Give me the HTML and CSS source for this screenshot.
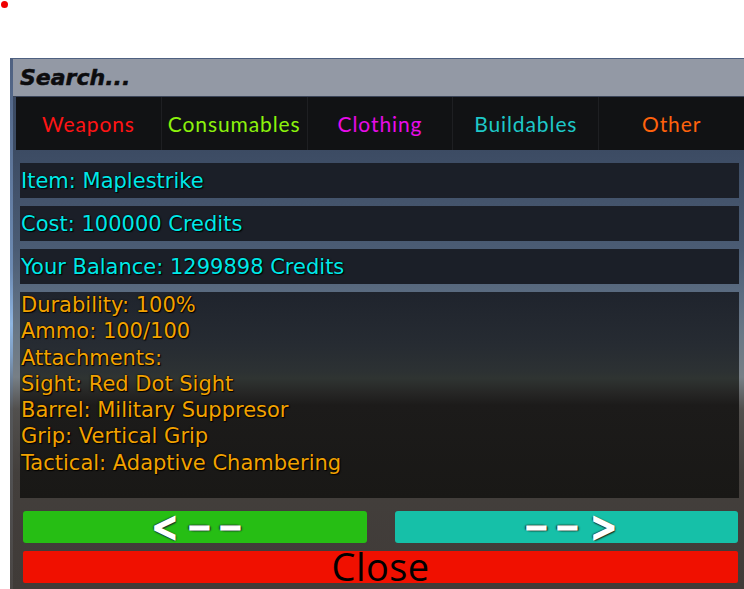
FILE: index.html
```html
<!DOCTYPE html>
<html>
<head>
<meta charset="utf-8">
<link rel="stylesheet" href="styles.css">
</head>
<body>
<div class="dot"></div>
<div class="panel">
  <div class="search">Search...</div>
  <div class="tabs">
    <div class="tab weapons">Weapons</div>
    <div class="tab consumables">Consumables</div>
    <div class="tab clothing">Clothing</div>
    <div class="tab buildables">Buildables</div>
    <div class="tab other">Other</div>
  </div>
  <div class="info">
    <div class="row">Item: Maplestrike</div>
    <div class="row">Cost: 100000 Credits</div>
    <div class="row">Your Balance: 1299898 Credits</div>
    <div class="details">
      <div>Durability: 100%</div>
      <div>Ammo: 100/100</div>
      <div>Attachments:</div>
      <div>Sight: Red Dot Sight</div>
      <div>Barrel: Military Suppresor</div>
      <div>Grip: Vertical Grip</div>
      <div>Tactical: Adaptive Chambering</div>
    </div>
  </div>
  <div class="nav">
    <button class="btn prev"><span class="lt">&lt;</span><span class="dash">-</span><span class="dash">-</span></button>
    <button class="btn next"><span class="dash">-</span><span class="dash">-</span><span class="gt">&gt;</span></button>
  </div>
  <button class="close"><span>Close</span></button>
</div>
</body>
</html>
```
FILE: styles.css
```css
html, body {
  margin: 0;
  padding: 0;
  background: #ffffff;
  width: 744px;
  height: 589px;
  overflow: hidden;
}

.dot {
  position: absolute;
  left: 1px;
  top: 1px;
  width: 7px;
  height: 7px;
  border-radius: 50%;
  background: #f00000;
}

.panel {
  box-sizing: border-box;
  margin: 58px 0 0 10px;
  width: 734px;
  height: 531px;
  border-top: 1px solid #3a4457;
  border-left: 3px solid #5a6f90;
  border-image: linear-gradient(to bottom, #4e6080 0%, #6e8cb4 40%, #8fb6e2 50%, #7d9cc0 56%, #55575a 66%, #4a4644 100%) 1;
  border-top-width: 1px;
  background: linear-gradient(to bottom,
    #3b4962 0%,
    #3c4b63 17%,
    #44546c 27%,
    #4b5c74 36%,
    #5a6b80 44%,
    #6a7886 52%,
    #777f86 60%,
    #52504e 66%,
    #433f3c 78%,
    #403b38 100%);
  display: flex;
  flex-direction: column;
}

.search {
  height: 38px;
  box-sizing: border-box;
  background: #9399a5;
  border-bottom: 1px solid #3a4458;
  padding-left: 7px;
  display: flex;
  align-items: center;
  font-family: "DejaVu Sans", sans-serif;
  font-weight: bold;
  font-style: italic;
  font-size: 22px;
  color: #0c0c0e;
  -webkit-text-stroke: 0.5px #0c0c0e;
}

.tabs {
  margin-left: 3px;
  height: 53px;
  display: grid;
  grid-template-columns: repeat(5, 1fr);
  gap: 1px;
  background: #1e1f22;
}

.tab {
  background: #111214;
  display: flex;
  align-items: center;
  justify-content: center;
  font-family: Lato, "Liberation Sans", sans-serif;
  font-weight: 400;
  font-size: 21px;
  letter-spacing: 0.9px;
}

.weapons { color: #ff1414; }
.consumables { color: #8cf20c; }
.clothing { color: #e80ce8; }
.buildables { color: #1ec8c8; }
.other { color: #ff620c; }

.info {
  margin: 13px 5px 0 7px;
  display: flex;
  flex-direction: column;
  gap: 8px;
}

.row {
  height: 35px;
  background: #1b1f28;
  display: flex;
  align-items: center;
  padding-left: 1px;
  font-family: "DejaVu Sans", sans-serif;
  font-size: 21px;
  color: #00e8e8;
  text-shadow: 1px 1px 1px #000, 0 0 2px #000;
}

.details {
  height: 206px;
  box-sizing: border-box;
  padding-left: 1px;
  background: linear-gradient(to bottom,
    #1f242d 0%,
    #262b32 25%,
    #2c3133 38%,
    #2f3432 42%,
    #262625 49%,
    #1c1b1a 55%,
    #191816 100%);
  font-family: "DejaVu Sans", sans-serif;
  font-size: 21px;
  line-height: 26.3px;
  color: #f2a200;
  text-shadow: 1px 1px 1px #000, 0 0 2px #000;
}

.nav {
  margin: 13px 6px 0 10px;
  display: grid;
  grid-template-columns: 1fr 1fr;
  gap: 28px;
}

.btn {
  height: 32px;
  border: none;
  border-radius: 3px;
  padding: 0 0 0 7px;
  display: flex;
  align-items: center;
  justify-content: center;
  font-family: "DejaVu Sans", sans-serif;
  font-weight: bold;
  font-size: 26px;
  color: #ffffff;
}

.prev { background: #26be14; }
.next { background: #16c0a8; }

.lt, .gt, .dash {
  display: inline-block;
  -webkit-text-stroke: 1.4px #ffffff;
  text-shadow: 1px 0 1px #1a3a28, -1px 0 1px #1a3a28, 0 1px 1px #1a3a28, 0 -1px 1px #1a3a28, 1px 1px 1px #1a3a28, -1px -1px 1px #1a3a28;
}

.lt, .gt {
  font-weight: normal;
  transform: scale(1.2, 1.6);
}

.lt { margin-right: 4px; }
.gt { margin-left: 6px; }

.dash {
  width: 23px;
  text-align: center;
  transform: scaleX(2.2);
  margin-left: 8px;
  -webkit-text-stroke: 1.2px #ffffff;
}

.next .dash { margin-left: 0; margin-right: 8px; }

.close {
  margin: 8px 6px 0 10px;
  height: 32px;
  border: none;
  border-radius: 2px;
  background: #f01000;
  padding: 0;
  overflow: visible;
  display: flex;
  align-items: flex-start;
  justify-content: center;
  font-family: "Open Sans", "Liberation Sans", sans-serif;
  font-size: 38px;
  letter-spacing: 0.4px;
  line-height: 30px;
  color: #000000;
}

.close span {
  display: block;
}
```
